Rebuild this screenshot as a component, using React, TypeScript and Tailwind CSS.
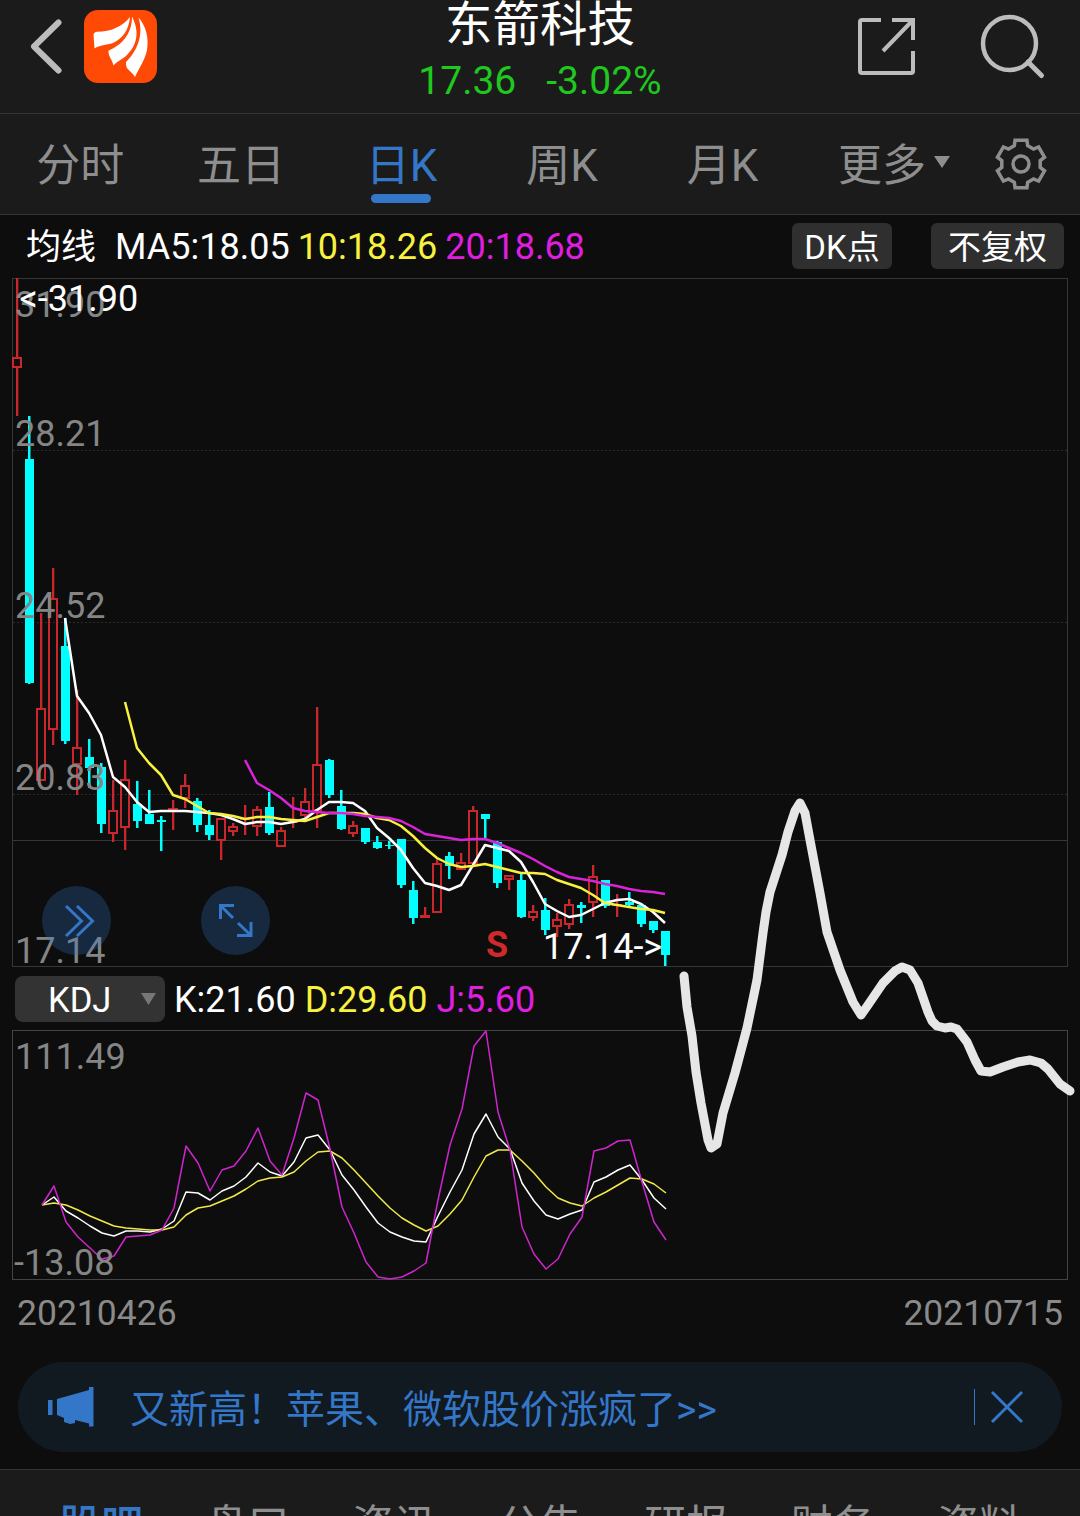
import clsx from "clsx";

type CandleColor = "up" | "down";
// high, body top, body bottom, low (chart y units)
type Candle = [CandleColor, number, number, number, number];

const UP = "#c9272b";
const DOWN = "#00ffff";

const candles: Candle[] = [
  ["up", 278, 357, 368, 416],
  ["down", 416, 459, 683, 684],
  ["up", 613, 708, 781, 781],
  ["up", 568, 598, 730, 745],
  ["down", 618, 646, 741, 744],
  ["up", 690, 747, 765, 795],
  ["down", 739, 757, 768, 788],
  ["down", 763, 767, 824, 833],
  ["up", 780, 810, 834, 842],
  ["up", 760, 779, 828, 850],
  ["down", 781, 804, 821, 828],
  ["down", 790, 814, 824, 824],
  ["down", 816, 820, 822, 851],
  ["up", 800, 808, 810, 830],
  ["up", 774, 785, 799, 808],
  ["down", 798, 801, 825, 832],
  ["down", 810, 825, 835, 840],
  ["up", 819, 818, 841, 860],
  ["up", 823, 826, 832, 836],
  ["up", 805, 818, 820, 835],
  ["up", 806, 809, 827, 836],
  ["down", 792, 807, 833, 835],
  ["up", 827, 830, 847, 847],
  ["up", 797, 821, 823, 828],
  ["up", 788, 801, 816, 820],
  ["up", 707, 764, 811, 828],
  ["down", 759, 760, 795, 798],
  ["down", 790, 806, 829, 830],
  ["up", 821, 825, 834, 837],
  ["down", 828, 828, 842, 844],
  ["down", 836, 842, 848, 849],
  ["down", 841, 845, 846, 849],
  ["down", 839, 839, 885, 888],
  ["down", 881, 890, 918, 924],
  ["up", 907, 915, 918, 918],
  ["up", 859, 863, 913, 913],
  ["down", 852, 856, 866, 879],
  ["up", 853, 862, 870, 870],
  ["up", 806, 810, 864, 864],
  ["down", 814, 814, 819, 838],
  ["down", 841, 842, 883, 888],
  ["up", 875, 875, 880, 890],
  ["down", 873, 880, 917, 918],
  ["up", 905, 911, 918, 921],
  ["down", 898, 910, 930, 935],
  ["up", 913, 919, 927, 937],
  ["up", 899, 904, 925, 929],
  ["down", 902, 905, 908, 923],
  ["up", 865, 876, 903, 917],
  ["down", 880, 880, 906, 908],
  ["up", 894, 904, 906, 917],
  ["down", 892, 902, 905, 906],
  ["down", 903, 905, 924, 927],
  ["down", 921, 921, 930, 933],
  ["down", 931, 931, 955, 966],
];

const ma5 = [
  618, 696, 713, 735, 777, 787, 802, 812, 811, 811, 811, 812, 813, 815, 819, 824, 822, 822, 824, 822,
  819, 810, 802, 802, 803, 811, 828, 838, 850, 868, 883, 886, 890, 885, 865, 845, 848, 851, 862, 882,
  904, 911, 917, 915, 909, 903, 900, 899, 904, 912, 923,
];
const ma10 = [
  702, 748, 763, 775, 795, 799, 806, 813, 814, 816, 819, 817, 817, 819, 820, 821, 817, 813, 813, 813,
  814, 818, 820, 826, 836, 848, 858, 864, 867, 866, 864, 867, 870, 873, 873, 874, 880, 884, 888, 895,
  903, 905, 907, 909, 910, 913,
];
const ma20 = [
  760, 783, 790, 798, 808, 811, 812, 813, 813, 814, 816, 817, 818, 821, 827, 834, 836, 838, 840, 839,
  839, 843, 848, 853, 859, 866, 872, 877, 879, 881, 884, 886, 889, 891, 892, 894,
];

const kLine = [
  1205, 1197, 1211, 1218, 1226, 1233, 1236, 1231, 1231, 1232, 1229, 1221, 1192, 1193, 1200, 1191, 1186,
  1177, 1163, 1172, 1176, 1162, 1138, 1135, 1150, 1175, 1190, 1207, 1223, 1232, 1237, 1241, 1242, 1216,
  1192, 1170, 1134, 1114, 1137, 1149, 1183, 1201, 1215, 1219, 1214, 1210, 1182, 1177, 1170, 1165, 1180,
  1198, 1209,
];
const dLine = [
  1205, 1203, 1205, 1210, 1216, 1221, 1226, 1228, 1229, 1230, 1230, 1227, 1215, 1208, 1206, 1201, 1196,
  1189, 1181, 1178, 1177, 1172, 1161, 1152, 1151, 1158, 1170, 1183, 1196, 1208, 1218, 1225, 1231, 1226,
  1214, 1200, 1177, 1156, 1150, 1150, 1161, 1173, 1187, 1198, 1203, 1206, 1198, 1192, 1185, 1178, 1179,
  1184, 1193,
];
const jLine = [
  1205, 1186, 1222, 1237, 1248, 1259, 1256, 1237, 1236, 1235, 1230, 1208, 1146, 1163, 1191, 1170, 1166,
  1151, 1128, 1161, 1175, 1138, 1093, 1100, 1149, 1207, 1233, 1262, 1277, 1279, 1277, 1271, 1263, 1200,
  1145, 1109, 1046, 1031, 1112, 1150, 1227, 1254, 1269, 1259, 1234, 1217, 1151, 1148, 1141, 1140, 1182,
  1222, 1240,
];

const sketch =
  "684,976 687,1007 692,1036 696,1072 701,1103 708,1140 711,1148 717,1144 723,1113 735,1073 747,1028 757,980 763,933 766,912 770,892 782,855 788,832 795,811 800,803 805,813 810,840 820,893 827,932 840,970 853,1002 861,1015 868,1005 883,983 895,971 902,967 910,970 918,983 928,1012 932,1021 937,1026 945,1028 951,1027 957,1029 967,1042 975,1060 981,1071 990,1072 1003,1067 1018,1062 1030,1060 1041,1063 1048,1069 1060,1084 1070,1091";

const periods = ["分时", "五日", "日K", "周K", "月K"];
const sections = ["股吧", "盘口", "资讯", "公告", "研报", "财务", "资料"];

const axisLabels = [
  { y: 317, text: "31.90" },
  { y: 446, text: "28.21" },
  { y: 618, text: "24.52" },
  { y: 790, text: "20.83" },
  { y: 963, text: "17.14" },
];

function toPoints(values: number[], startX: number) {
  return values.map((y, i) => `${startX + i * 12},${y}`).join(" ");
}

function gearPoints(cx: number, cy: number) {
  const points: string[] = [];
  for (let i = 0; i < 6; i++) {
    const tooth = [
      [19.5, -20],
      [24.5, -14],
      [24.5, 14],
      [19.5, 20],
    ];
    for (const [r, offset] of tooth) {
      const a = ((i * 60 + offset - 90) * Math.PI) / 180;
      points.push(`${(cx + r * Math.cos(a)).toFixed(2)},${(cy + r * Math.sin(a)).toFixed(2)}`);
    }
  }
  return points.join(" ");
}

function Header() {
  return (
    <header className="flex h-[114px] items-start justify-between border-b border-[#363636] bg-[#1b1b1b]">
      <div className="flex w-[280px] items-center pt-2.5 pl-[30px]">
        <svg width="34" height="56" viewBox="0 0 34 56" fill="none">
          <path
            d="M28.500 3.500 4 27.500 28.500 51.500"
            stroke="#bcbcbc"
            strokeWidth="6"
            strokeLinecap="round"
            strokeLinejoin="round"
          />
        </svg>
        <svg className="ml-5" width="73" height="73" viewBox="0 0 73 73">
          <rect width="73" height="73" rx="14" fill="#ff4a05" />
          <g fill="#fff">
            <path d="M9.500 25Q10 22 13 21.800C26 22 38 17 46 7C45 20 38 29 29 33C22 35 16 35 10.500 38.500Z" />
            <path d="M48 6.500C56 22 53 35 43 45C38 50 33 51 29.500 55.500C28 49 24 46 24.500 40.500C38 35 48 24 48 6.500Z" />
            <path d="M54.500 7.500C62 16 65 28 63 40C61 50 55 58 51 67C48 61 41 60 42 52C53 41 60 26 54.500 7.500Z" />
          </g>
        </svg>
      </div>
      <div className="flex flex-col items-center">
        <h1 className="text-[47.5px] leading-[50px] text-white">东箭科技</h1>
        <p className="mt-1.5 flex gap-[30px] text-[39px] leading-[51px] text-[#1fc71f]">
          <span>17.36</span>
          <span>-3.02%</span>
        </p>
      </div>
      <div className="flex w-[280px] justify-end gap-[61px] pt-3.5 pr-[34px]">
        <svg width="64" height="64" viewBox="855 14 64 64" fill="none" stroke="#bcbcbc" strokeWidth="4">
          <path d="M881 20H862Q860 20 860 22V71Q860 73 862 73H911Q913 73 913 71V51" />
          <path d="M892 20H913V40M913 20 883 51" />
        </svg>
        <svg width="66" height="66" viewBox="980 14 66 66" fill="none" stroke="#bcbcbc" strokeWidth="4.500">
          <circle cx="1009.500" cy="43.500" r="26.500" />
          <path d="M1028 62 1041.500 75.500" strokeWidth="5" strokeLinecap="round" />
        </svg>
      </div>
    </header>
  );
}

function PeriodTabs() {
  return (
    <nav className="flex h-[101px] border-b border-[#363636] bg-[#1b1b1b] text-[44px] leading-[104px] text-[#8e8e8e]">
      {periods.map((label) => (
        <button
          key={label}
          type="button"
          className={clsx("relative h-[100px] w-[160.6px]", label === "日K" && "text-[#3477c8]")}
        >
          {label}
          {label === "日K" ? (
            <span className="absolute top-20 left-[50px] h-[9px] w-[60px] rounded-full bg-[#3477c8]" />
          ) : null}
        </button>
      ))}
      <button type="button" className="flex h-[100px] items-center pl-[35px]">
        <span className="pt-1">更多</span>
        <svg className="mb-1 ml-2" width="16" height="12" viewBox="0 0 16 12">
          <path d="M0 0H16L8 12Z" fill="#8e8e8e" />
        </svg>
      </button>
      <button type="button" className="ml-[43px] flex h-[100px] items-center">
        <svg width="56" height="56" viewBox="0 0 56 56" fill="none" stroke="#8e8e8e" strokeWidth="3.500">
          <polygon points={gearPoints(28, 28)} />
          <circle cx="28" cy="28" r="8" />
        </svg>
      </button>
    </nav>
  );
}

function IndicatorRow() {
  return (
    <div className="flex h-[59px] items-center pt-[3px] pr-4 pl-[26px] text-[36px] leading-[46px] text-white">
      <span className="pt-1 text-[35px]">均线</span>
      <span className="ml-[19px] pt-0.5">MA5:18.05</span>
      <span className="ml-2 pt-0.5 text-[#f8f23e]">10:18.26</span>
      <span className="ml-2 pt-0.5 text-[#e01ee0]">20:18.68</span>
      <button
        type="button"
        className="ml-auto h-[46px] w-[100px] rounded-md bg-[#2f2f2f] pt-0.5 text-[33px] leading-[46px]"
      >
        DK点
      </button>
      <button
        type="button"
        className="ml-[39px] h-[46px] w-[133px] rounded-md bg-[#2f2f2f] pt-0.5 text-[33px] leading-[46px]"
      >
        不复权
      </button>
    </div>
  );
}

function CandleShape({ candle, x }: { candle: Candle; x: number }) {
  const [color, high, top, bottom, low] = candle;
  if (color === "down") {
    return (
      <g fill={DOWN}>
        <rect x={x - 1} y={high} width="2.500" height={low - high} />
        <rect x={x - 4} y={top} width="9" height={bottom - top} />
      </g>
    );
  }
  const flat = bottom - top < 4;
  return (
    <g fill={UP}>
      <rect x={x - 1} y={high} width="2.300" height={Math.max(top - high, 0)} />
      <rect x={x - 1} y={bottom} width="2.300" height={Math.max(low - bottom, 0)} />
      {flat ? (
        <rect x={x - 5} y={top} width="10" height={bottom - top} />
      ) : (
        <rect
          x={x - 4}
          y={top + 1}
          width="8"
          height={bottom - top - 2}
          fill="none"
          stroke={UP}
          strokeWidth="2"
        />
      )}
    </g>
  );
}

function PriceChart() {
  return (
    <div className="relative h-[696px]">
      <svg className="block" width="1080" height="696" viewBox="0 274 1080 696" fontSize="36">
        <g stroke="#2b2b2b" strokeDasharray="2 2">
          <path d="M13 450.500H1067M13 622.500H1067M13 794.500H1067" />
        </g>
        <path d="M13 840.500H1067" stroke="#363636" />
        <rect x="12.500" y="278.500" width="1055" height="688" fill="none" stroke="#363636" />
        {candles.map((candle, i) => (
          <CandleShape key={i} candle={candle} x={17 + i * 12} />
        ))}
        <g fill="none" strokeWidth="2.500" strokeLinejoin="round">
          <polyline points={toPoints(ma5, 65)} stroke="#fff" />
          <polyline points={toPoints(ma10, 125)} stroke="#f8f23e" />
          <polyline points={toPoints(ma20, 245)} stroke="#d824d8" />
        </g>
        <g fill="#858585">
          {axisLabels.map((label) => (
            <text key={label.text} x="15" y={label.y}>
              {label.text}
            </text>
          ))}
        </g>
        <text x="19.500" y="311" fill="#fff">
          &lt;-31.90
        </text>
        <text x="543" y="959" fill="#fff">
          17.14-&gt;
        </text>
        <text x="486" y="957" fill="#cf2a2a" fontWeight="700">
          S
        </text>
      </svg>
      <button
        type="button"
        className="absolute top-[612px] left-[42px] flex size-[69px] items-center justify-center rounded-full bg-[#3477c8]/27"
      >
        <svg width="69" height="69" viewBox="0 0 69 69" fill="none" stroke="#3477c8" strokeWidth="3">
          <path d="M24 20 39.500 35 24 50M35 20 50.500 35 35 50" />
        </svg>
      </button>
      <button
        type="button"
        className="absolute top-[612px] left-[201px] flex size-[69px] items-center justify-center rounded-full bg-[#3477c8]/27"
      >
        <svg width="69" height="69" viewBox="0 0 69 69" fill="none" stroke="#3477c8" strokeWidth="3">
          <path d="M33 19.500H19.500V33M19.500 19.500 32 32M50 36V49.500H36M50 49.500 37 37" />
        </svg>
      </button>
    </div>
  );
}

function KdjPanel() {
  return (
    <>
      <div className="flex h-[57px] items-center pl-[15px] text-[36px] leading-[46px] text-white">
        <button
          type="button"
          className="flex h-[46px] w-[150px] items-center rounded-lg bg-[#333] pr-[9px] pl-[33px] text-[34.5px]"
        >
          <span className="pt-0.5">KDJ</span>
          <svg className="ml-auto" width="15" height="12" viewBox="0 0 15 12">
            <path d="M0 0H15L7.500 12Z" fill="#777" />
          </svg>
        </button>
        <span className="ml-[9px] pt-0.5">K:21.60</span>
        <span className="ml-[9px] pt-0.5 text-[#f8f23e]">D:29.60</span>
        <span className="ml-[9px] pt-0.5 text-[#e01ee0]">J:5.60</span>
      </div>
      <svg className="block" width="1080" height="256" viewBox="0 1027 1080 256" fontSize="36">
        <rect x="12.500" y="1030.500" width="1055" height="249" fill="none" stroke="#444" />
        <g fill="none" strokeWidth="1.500" strokeLinejoin="round">
          <polyline points={toPoints(kLine, 42)} stroke="#fff" />
          <polyline points={toPoints(dLine, 42)} stroke="#f1e94a" />
          <polyline points={toPoints(jLine, 42)} stroke="#cf25cf" />
        </g>
        <g fill="#858585">
          <text x="15" y="1069">
            111.49
          </text>
          <text x="14" y="1275">
            -13.08
          </text>
        </g>
      </svg>
      <div className="flex h-[79px] justify-between px-[17px] pt-2 text-[35.5px] leading-[44px] text-[#8a8a8a]">
        <span>20210426</span>
        <span>20210715</span>
      </div>
    </>
  );
}

function NewsBanner() {
  return (
    <div className="mx-[18px] flex h-[90px] items-center rounded-full bg-[#111921] pr-[38px] pl-[30px] text-[#3477c8]">
      <svg width="46" height="40" viewBox="0 0 46 40" fill="#3477c8">
        <path d="M0 13H4.500V28H0ZM9 12 41 3V0H45.500V39.500H41V36.500L27 33V36L22 37 16 35V31L9 28Z" />
      </svg>
      <p className="ml-9 pt-1.5 text-[39px] leading-[56px]">又新高！苹果、微软股价涨疯了&gt;&gt;</p>
      <span className="ml-auto h-9 w-px bg-[#3477c8]" />
      <button type="button" className="ml-[15px]">
        <svg width="34" height="34" viewBox="0 0 34 34" fill="none" stroke="#3477c8" strokeWidth="3">
          <path d="M2 2 32 32M32 2 2 32" />
        </svg>
      </button>
    </div>
  );
}

function SectionTabs() {
  return (
    <nav className="mt-[17px] flex h-[110px] border-t border-[#363636] bg-[#1b1b1b] pl-7 text-[42px] leading-[112px] text-[#8e8e8e]">
      {sections.map((label, i) => (
        <button
          key={label}
          type="button"
          className={clsx("w-[146.3px] shrink-0", i === 0 && "font-medium text-[#3477c8]")}
        >
          {label}
        </button>
      ))}
    </nav>
  );
}

export default function App() {
  return (
    <main className="relative h-[1516px] w-[1080px] overflow-hidden bg-[#0d0d0d] font-[Roboto,'Noto_Sans_CJK_SC',sans-serif]">
      <Header />
      <PeriodTabs />
      <IndicatorRow />
      <PriceChart />
      <KdjPanel />
      <NewsBanner />
      <SectionTabs />
      {/* freehand forecast drawn across both charts */}
      <svg className="pointer-events-none absolute inset-0" width="1080" height="1516" viewBox="0 0 1080 1516">
        <polyline
          points={sketch}
          fill="none"
          stroke="#e6e6e6"
          strokeWidth="9"
          strokeLinecap="round"
          strokeLinejoin="round"
        />
      </svg>
    </main>
  );
}
